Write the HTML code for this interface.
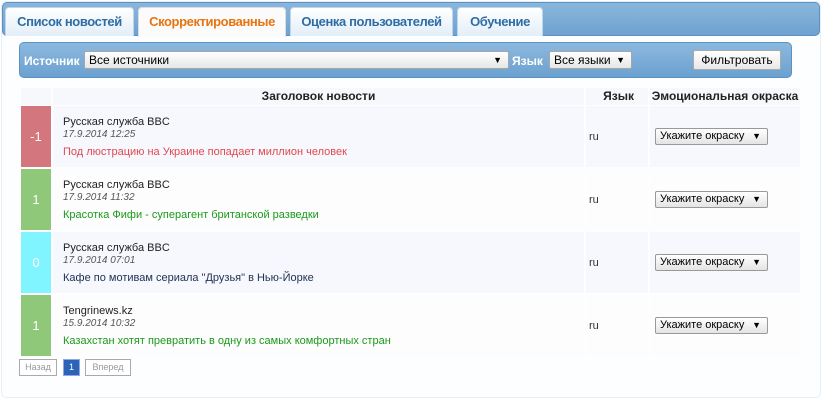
<!DOCTYPE html>
<html><head><meta charset="utf-8">
<style>
*{box-sizing:border-box;margin:0;padding:0}
body{width:822px;height:400px;background:#fff;font-family:"Liberation Sans",sans-serif;position:relative;overflow:hidden}
.outer{position:absolute;left:1px;top:1px;width:820px;height:397px;border:1px solid #e6eff7;border-radius:5px;background:#fdfeff}
.hdr{position:absolute;left:2px;top:2px;width:818px;height:34px;border:1px solid #5b92c4;border-radius:5px;background:linear-gradient(#8ab6dc,#6fa2d0)}
.tab{position:absolute;top:7px;height:29px;border:1px solid #bcd6ec;border-bottom:none;border-radius:4px 4px 0 0;background:linear-gradient(#ffffff,#e3eef8);font-weight:bold;font-size:13px;letter-spacing:-0.4px;color:#2e6da4;text-align:center;line-height:27px}
.tab.act{background:#fbfbfb;color:#e8740f;height:30px;border-color:#ddd}
.fbar{position:absolute;left:19px;top:42px;width:773px;height:36px;border:1px solid #5b92c4;border-radius:5px;background:linear-gradient(#8cb8de,#6ba1d0)}
.lbl{position:absolute;top:11px;color:#fff;font-weight:bold;font-size:12px}
.sel{position:absolute;background:linear-gradient(#fff,#e6e6e6);border:1px solid #a6a6a6;border-radius:2px;font-size:12px;color:#000;padding-left:4px;line-height:16px}
.sel b{position:absolute;right:6px;top:0;font-size:9px}
.btn{position:absolute;left:673px;top:7px;width:88px;height:20px;background:linear-gradient(#fff,#e8e8e8);border:1px solid #aaa;border-radius:2px;font-size:12px;text-align:center;line-height:18px}
.th{position:absolute;top:88px;height:17px;background:#f7f8fc;font-weight:bold;font-size:12px;color:#222;line-height:17px}
.row{position:absolute;left:21px;width:779px;height:61px}
.sc{position:absolute;left:0;top:0;width:30px;height:61px;color:#fff;font-size:13px;text-align:center;line-height:61px}
.c2{position:absolute;left:32px;top:0;width:531px;height:61px;background:#f7f8fd}
.c3{position:absolute;left:565px;top:0;width:62px;height:61px;background:#f7f8fd;font-size:11px;line-height:63px;padding-left:3px;color:#333}
.c4{position:absolute;left:629px;top:0;width:150px;height:61px;background:#f7f8fd}
.row.w .c2,.row.w .c3,.row.w .c4{background:#fdfdfe}
.src{position:absolute;left:10px;top:10px;font-size:11px;color:#222}
.dt{position:absolute;left:10px;top:23px;font-size:10px;color:#555;font-style:italic}
.tt{position:absolute;left:10px;top:40px;font-size:11px}
.em{position:absolute;left:5px;top:22px;width:113px;height:17px;background:linear-gradient(#fff,#e4e4e4);border:1px solid #999;border-radius:2px;font-size:11px;line-height:15px;padding-left:4px;color:#000}
.em b{position:absolute;right:6px;top:0;font-size:9px}
.pg{position:absolute;top:359px;height:17px;border:1px solid #aaa;font-size:9px;color:#999;text-align:center;line-height:15px;background:#fff}
</style></head><body>
<div class="outer"></div>
<div class="hdr"></div>
<div class="tab" style="left:5px;width:129px">Список новостей</div>
<div class="tab act" style="left:138px;width:148px">Скорректированные</div>
<div class="tab" style="left:290px;width:163px">Оценка пользователей</div>
<div class="tab" style="left:457px;width:86px">Обучение</div>

<div class="fbar">
 <div class="lbl" style="left:4px">Источник</div>
 <div class="sel" style="left:64px;top:8px;width:425px;height:18px">Все источники<b>▼</b></div>
 <div class="lbl" style="left:492px">Язык</div>
 <div class="sel" style="left:529px;top:8px;width:83px;height:18px">Все языки<b>▼</b></div>
 <div class="btn">Фильтровать</div>
</div>

<div class="th" style="left:21px;width:30px"></div>
<div class="th" style="left:53px;width:531px;text-align:center">Заголовок новости</div>
<div class="th" style="left:586px;width:62px;text-align:right;padding-right:14px">Язык</div>
<div class="th" style="left:650px;width:150px;text-align:center">Эмоциональная окраска</div>

<div class="row" style="top:106px"><div class="sc" style="background:#d4767d">-1</div><div class="c2"><div class="src">Русская служба BBC</div><div class="dt">17.9.2014 12:25</div><div class="tt" style="color:#e0484f">Под люстрацию на Украине попадает миллион человек</div></div><div class="c3">ru</div><div class="c4"><div class="em">Укажите окраску<b>▼</b></div></div></div>
<div class="row w" style="top:169px"><div class="sc" style="background:#8fc878">1</div><div class="c2"><div class="src">Русская служба BBC</div><div class="dt">17.9.2014 11:32</div><div class="tt" style="color:#1a9a1a">Красотка Фифи - суперагент британской разведки</div></div><div class="c3">ru</div><div class="c4"><div class="em">Укажите окраску<b>▼</b></div></div></div>
<div class="row" style="top:232px"><div class="sc" style="background:#80f4ff">0</div><div class="c2"><div class="src">Русская служба BBC</div><div class="dt">17.9.2014 07:01</div><div class="tt" style="color:#223355">Кафе по мотивам сериала "Друзья" в Нью-Йорке</div></div><div class="c3">ru</div><div class="c4"><div class="em">Укажите окраску<b>▼</b></div></div></div>
<div class="row w" style="top:295px"><div class="sc" style="background:#8fc878">1</div><div class="c2"><div class="src">Tengrinews.kz</div><div class="dt">15.9.2014 10:32</div><div class="tt" style="color:#1a9a1a">Казахстан хотят превратить в одну из самых комфортных стран</div></div><div class="c3">ru</div><div class="c4"><div class="em">Укажите окраску<b>▼</b></div></div></div>

<div class="pg" style="left:19px;width:38px">Назад</div>
<div class="pg" style="left:63px;width:17px;background:#2b63b8;color:#fff;border-color:#8fa8e0">1</div>
<div class="pg" style="left:85px;width:46px">Вперед</div>
</body></html>
